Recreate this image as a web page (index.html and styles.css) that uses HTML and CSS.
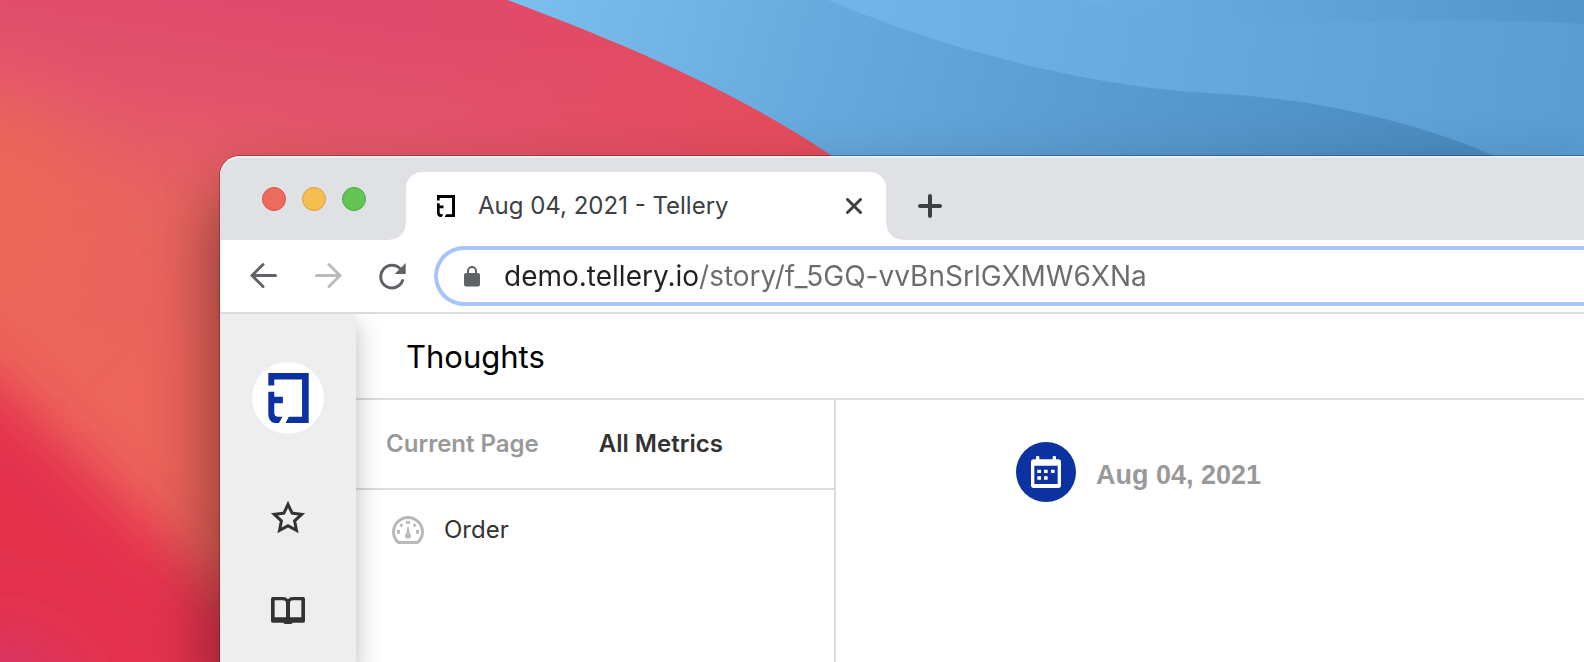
FILE: index.html
```html
<!DOCTYPE html>
<html lang="en">
<head>
<meta charset="utf-8">
<title>Aug 04, 2021 - Tellery</title>
<link rel="stylesheet" href="styles.css">
</head>
<body>
<svg class="wallpaper" viewBox="0 0 1584 662" preserveAspectRatio="xMinYMin slice" aria-hidden="true">
  <defs>
    <linearGradient id="low" gradientUnits="userSpaceOnUse" x1="520" y1="0" x2="1420" y2="240"><stop offset="0" stop-color="#7cbfee"/><stop offset=".3" stop-color="#68abde"/><stop offset=".6" stop-color="#5b9dd3"/><stop offset="1" stop-color="#4b8cc0"/></linearGradient>
    <linearGradient id="mid" gradientUnits="userSpaceOnUse" x1="840" y1="0" x2="1584" y2="120"><stop offset="0" stop-color="#71b5e8"/><stop offset=".3" stop-color="#6aade2"/><stop offset="1" stop-color="#599dd3"/></linearGradient>
    <linearGradient id="high" gradientUnits="userSpaceOnUse" x1="1080" y1="0" x2="1584" y2="0"><stop offset="0" stop-color="#6bafe3"/><stop offset=".35" stop-color="#63a6da"/><stop offset="1" stop-color="#5095cb"/></linearGradient>
    <linearGradient id="red" gradientUnits="userSpaceOnUse" x1="300" y1="0" x2="240" y2="400"><stop offset="0" stop-color="#df4a6c"/><stop offset=".28" stop-color="#e3546b"/><stop offset=".55" stop-color="#e96460"/><stop offset="1" stop-color="#ed655b"/></linearGradient>
    <linearGradient id="edge" gradientUnits="userSpaceOnUse" x1="400" y1="100" x2="800" y2="100"><stop offset="0" stop-color="#e64c62" stop-opacity="0"/><stop offset="1" stop-color="#e54c5c"/></linearGradient>
    <filter id="soft" x="-80%" y="-80%" width="260%" height="260%"><feGaussianBlur stdDeviation="40"/></filter>
    <filter id="crest" x="-50%" y="-50%" width="200%" height="200%"><feGaussianBlur stdDeviation="26"/></filter>
    <clipPath id="dune"><path d="M0 0H507C630 46 740 94 832 156V662H0Z"/></clipPath>
  </defs>
  <path fill="url(#low)" d="M480 0H1584V662H480Z"/>
  <path fill="url(#mid)" d="M828 0C940 47 1070 82 1191 92Q1230 94 1260 97C1320 103 1410 119 1497 157H1584V0Z"/>
  <path fill="url(#high)" d="M1074 0C1160 15 1230 23 1316 23C1400 21 1500 18 1584 24V0Z"/>
  <g clip-path="url(#dune)">
    <path fill="url(#red)" d="M0 0H832V662H0Z"/>
    <path fill="url(#edge)" d="M400 0H832V662H400Z"/>
    <ellipse cx="-20" cy="220" rx="110" ry="120" fill="#ed6659" filter="url(#soft)"/>
    <path fill="#e4304e" filter="url(#crest)" d="M-150 270L0 384L100 476L220 590L390 760H-150Z"/>
    <ellipse cx="-10" cy="720" rx="80" ry="70" fill="#cf3874" filter="url(#soft)"/>
  </g>
</svg>

<div class="window">
  <header class="tab-strip">
    <div class="lights">
      <button class="light close" aria-label="Close window"></button>
      <button class="light minimise" aria-label="Minimise window"></button>
      <button class="light maximise" aria-label="Maximise window"></button>
    </div>
    <div class="tab">
      <svg class="favicon" viewBox="0 0 122 151" preserveAspectRatio="none" aria-hidden="true"><path d="M0 0H122V151H52L62 132H102V20H18V38H0ZM0 57H18V72H44V91H18V120Q18 132 30 132H43L32 151H25C8 151 0 140 0 122Z"/></svg>
      <span class="tab-title">Aug 04, 2021 - Tellery</span>
      <button class="icon-button tab-close" aria-label="Close tab"><svg width="16" height="16" viewBox="0 0 16 16"><path d="M1.5 1.5L14.5 14.5M14.5 1.5L1.5 14.5"/></svg></button>
    </div>
    <button class="icon-button new-tab" aria-label="New tab"><svg width="24" height="24" viewBox="0 0 24 24"><path d="M12 2V22M2 12H22"/></svg></button>
  </header>

  <div class="toolbar">
    <div class="nav">
      <button class="icon-button" aria-label="Back"><svg width="28" height="28" viewBox="0 0 28 28"><path d="M25.500 13.500H3M13 2.500L2 13.500L13 24.500"/></svg></button>
      <button class="icon-button forward" aria-label="Forward" disabled><svg width="28" height="28" viewBox="0 0 28 28"><path d="M2.500 13.500H25M15 2.500L26 13.500L15 24.500"/></svg></button>
      <button class="icon-button" aria-label="Reload"><svg width="28" height="28" viewBox="0 0 28 28"><path d="M22.500 7.200A11.300 11.300 0 1 0 24.600 18.600"/><path class="solid" d="M27.700 1V12H16.700Z"/></svg></button>
    </div>
    <label class="address">
      <svg width="16" height="22" viewBox="0 0 16 22" aria-hidden="true"><path fill="#5f6368" d="M2 8H3V6A5 5 0 0 1 13 6V8H14A2 2 0 0 1 16 10V19.500A2 2 0 0 1 14 21.500H2A2 2 0 0 1 0 19.500V10A2 2 0 0 1 2 8ZM5 8H11V6A3 3 0 0 0 5 6Z"/></svg>
      <input class="url" type="text" aria-label="Address" spellcheck="false" value="demo.tellery.io/story/f_5GQ-vvBnSrlGXMW6XNa">
    </label>
  </div>

  <div class="app">
    <nav class="sidebar">
      <a class="brand" href="#" aria-label="Tellery"><svg width="41" height="50" viewBox="0 0 122 151"><path d="M0 0H122V151H52L62 132H102V20H18V38H0ZM0 57H18V72H44V91H18V120Q18 132 30 132H43L32 151H25C8 151 0 140 0 122Z"/></svg></a>
      <a class="side-link" href="#" aria-label="Starred"><svg width="36" height="36" viewBox="0 0 24 24"><path d="M12 18.260l-7.053 3.948 1.575-7.928L.587 8.792l8.027-.952L12 .5l3.386 7.340 8.027.952-5.935 5.488 1.575 7.928L12 18.260zm0-2.292l4.247 2.377-.949-4.773 3.573-3.305-4.833-.573L12 5.275l-2.038 4.420-4.833.573 3.573 3.305-.949 4.773L12 15.968z"/></svg></a>
      <a class="side-link" href="#" aria-label="Stories"><svg width="34" height="27" viewBox="0 0 102 81"><path fill-rule="evenodd" d="M5 0H37Q46 0 51 7Q56 0 65 0H97Q102 0 102 5V72Q102 77 97 77H65Q64 81 58 81H44Q38 81 37 77H5Q0 77 0 72V5Q0 0 5 0ZM11 10V61H45V18Q45 10 36 10ZM57 18V61H91V10H66Q57 10 57 18Z"/></svg></a>
    </nav>
    <div class="page">
      <h1 class="page-title">Thoughts</h1>
      <div class="columns">
        <section class="metrics">
          <div class="metric-tabs" role="tablist">
            <button class="metric-tab" role="tab" aria-selected="false">Current Page</button>
            <button class="metric-tab" role="tab" aria-selected="true">All Metrics</button>
          </div>
          <a class="metric" href="#">
            <svg width="32" height="28" viewBox="0 0 96 84" aria-hidden="true"><path fill="none" stroke="#b9b9b9" stroke-width="9" stroke-linejoin="round" d="M19 79.500C10 71 4.500 60 4.500 48A43.500 43.500 0 0 1 91.500 48C91.500 60 86 71 77 79.500Z"/><path fill="#b9b9b9" d="M15 42H24V53H15ZM72 42H81V53H72ZM42 15H54V23H42ZM22 28L28 22L34 28L28 34ZM62 28L68 22L74 28L68 34ZM46 33H50L53 52A9 9 0 1 1 43 52Z"/></svg>
            <span>Order</span>
          </a>
        </section>
        <main class="story">
          <div class="date">
            <span class="date-badge"><svg width="30" height="32" viewBox="0 0 90 96" aria-hidden="true"><path fill="#fff" fill-rule="evenodd" d="M15 10V3Q15 0 18 0H22Q25 0 25 3V10H65V3Q65 0 68 0H72Q75 0 75 3V10H82Q90 10 90 18V88Q90 96 82 96H8Q0 96 0 88V18Q0 10 8 10ZM10 29V84H80V29ZM19 41H30V51H19ZM39 41H50V51H39ZM60 41H71V51H60ZM19 61H30V71H19ZM39 61H50V71H39Z"/></svg></span>
            <h2 class="date-text">Aug 04, 2021</h2>
          </div>
        </main>
      </div>
    </div>
  </div>
</div>
</body>
</html>
```
FILE: styles.css
```css
* { box-sizing: border-box; }

body {
  margin: 0;
  min-height: 100vh;
  display: flex;
  overflow: hidden;
  background: #5b9dd3;
  font-family: Inter, "Noto Sans", sans-serif;
  color: #333;
}

button { border: 0; padding: 0; background: none; font: inherit; color: inherit; }
a { color: inherit; text-decoration: none; }
svg { display: block; flex: none; }

.wallpaper { position: absolute; inset: 0; width: 100%; height: 100%; z-index: -1; }

.window {
  flex: 1;
  min-width: 0;
  margin: 156px 0 0 220px;
  display: flex;
  flex-direction: column;
  border-radius: 20px 0 0 0;
  background: #fff;
  box-shadow: 0 0 0 1px rgba(0, 0, 0, .25), 0 40px 70px 2px rgba(0, 0, 0, .48);
}

.tab-strip {
  height: 84px;
  display: flex;
  align-items: flex-end;
  padding-left: 42px;
  background: #dfe1e5;
  border-radius: 20px 0 0 0;
  box-shadow: inset 0 2px 0 #eceef0;
}

.lights { display: flex; gap: 16px; padding-bottom: 29px; margin-right: 40px; }
.light { width: 24px; height: 24px; border-radius: 50%; border: 1px solid; }
.close { background: #ed6a5e; border-color: #d9544a; }
.minimise { background: #f5bf4f; border-color: #d9a03c; }
.maximise { background: #62c554; border-color: #52a842; }

.tab {
  position: relative;
  width: 480px;
  height: 68px;
  display: flex;
  align-items: center;
  padding: 0 24px 0 31px;
  border-radius: 16px 16px 0 0;
  background: #fff;
}
.tab::before, .tab::after {
  content: "";
  position: absolute;
  bottom: 0;
  width: 16px;
  height: 16px;
}
.tab::before { right: 100%; background: radial-gradient(circle at 0 0, transparent 15px, #fff 16px); }
.tab::after { left: 100%; background: radial-gradient(circle at 100% 0, transparent 15px, #fff 16px); }
.favicon { width: 18px; height: 22px; margin-right: 23px; }
.tab-title { flex: 1; font-size: 24px; line-height: 28px; color: #3c4043; }

.icon-button svg { fill: none; stroke: #5f6368; stroke-width: 3; stroke-linecap: round; }
.icon-button .solid { fill: #5f6368; stroke: none; }
.icon-button.tab-close svg { stroke: #3c4043; }
.new-tab { padding: 0 0 22px 32px; }
.icon-button.new-tab svg { stroke: #3c4043; stroke-width: 4; }

.toolbar {
  height: 74px;
  display: flex;
  align-items: center;
  gap: 28px;
  padding-left: 30px;
  border-bottom: 2px solid #dadbe0;
}
.nav { display: flex; gap: 36px; }
.icon-button.forward svg { stroke: #babbbe; }

.address {
  flex: 1;
  min-width: 0;
  height: 60px;
  display: flex;
  align-items: center;
  gap: 24px;
  padding-left: 26px;
  border: 4px solid #a8c5fa;
  border-right: 0;
  border-radius: 30px 0 0 30px;
}
.url {
  flex: 1;
  min-width: 0;
  border: 0;
  padding: 0;
  outline: 0;
  font: 28px/36px Inter, "Noto Sans", sans-serif;
  color: transparent;
  background: linear-gradient(to right, #202124 195px, #6b6c6f 195px);
  background-clip: text;
}

.app { flex: 1; display: flex; }

.sidebar {
  width: 136px;
  display: flex;
  flex-direction: column;
  align-items: center;
  padding-top: 48px;
  background: #eee;
  box-shadow: 0 10px 24px rgba(0, 0, 0, .28);
  clip-path: inset(0 -40px 0 0);
}
.brand {
  width: 72px;
  height: 72px;
  margin-bottom: 48px;
  display: grid;
  place-items: center;
  border-radius: 50%;
  background: #fff;
}
.brand svg { fill: #0b32a0; }
.side-link { width: 72px; height: 72px; margin-bottom: 20px; display: grid; place-items: center; }
.side-link svg { fill: #333; }

.page { flex: 1; min-width: 0; display: flex; flex-direction: column; }
.page-title {
  margin: 0;
  padding: 23px 50px 21px;
  border-bottom: 2px solid #dcdcdc;
  font-size: 31px;
  line-height: 40px;
  font-weight: 400;
  color: #000;
}
.columns { flex: 1; display: flex; }
.metrics { width: 480px; border-right: 2px solid #dcdcdc; }
.metric-tabs {
  height: 90px;
  display: flex;
  align-items: center;
  gap: 60px;
  padding-left: 30px;
  border-bottom: 2px solid #dcdcdc;
  font-size: 24px;
  line-height: 28px;
  font-weight: 600;
}
.metric-tab { color: #999; }
.metric-tab[aria-selected="true"] { color: #333; }
.metric {
  display: flex;
  align-items: center;
  gap: 20px;
  padding: 26px 36px;
  font-size: 24px;
  line-height: 28px;
}

.story { flex: 1; padding: 42px 180px; }
.date { display: flex; align-items: center; gap: 20px; }
.date-badge {
  width: 60px;
  height: 60px;
  display: grid;
  place-items: center;
  border-radius: 50%;
  background: #0b32a0;
}
.date-text {
  margin: 0;
  padding-top: 5px;
  font: bold 27px/32px "Liberation Sans", Arial, sans-serif;
  color: #999;
}
```
